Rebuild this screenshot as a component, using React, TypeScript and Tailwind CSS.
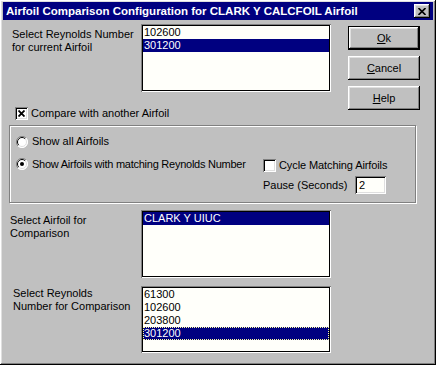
import React from "react";

const raised =
  "shadow-[inset_-1px_-1px_#000,inset_1px_1px_#fff,inset_-2px_-2px_#808080,inset_2px_2px_#dfdfdf]";

const ListBox = ({
  items,
  selected,
  focus,
  className,
}: {
  items: string[];
  selected: number;
  focus?: boolean;
  className: string;
}) => (
  <div
    className={`bg-[#fffffa] p-[2px] shadow-[inset_1px_1px_#808080,inset_-1px_-1px_#fff,inset_2px_2px_#000,inset_-2px_-2px_#000] ${className}`}
  >
    {items.map((it, i) => (
      <div
        key={it}
        className={`h-[13px] leading-[13px] pl-[1px] ${
          i === selected ? "bg-[#000080] text-white" : ""
        } ${i === selected && focus ? "outline-1 outline-dotted outline-[#ffffa0] -outline-offset-1" : ""}`}
      >
        {it}
      </div>
    ))}
  </div>
);

const Button = ({ label, def }: { label: React.ReactNode; def?: boolean }) => (
  <div
    className={`h-[24px] w-[72px] flex items-center justify-center ${
      def ? "border border-black" : ""
    }`}
  >
    <div className={`w-full h-full flex items-center justify-center ${raised}`}>{label}</div>
  </div>
);

const CheckBox = ({ checked }: { checked?: boolean }) => (
  <div className="w-[13px] h-[13px] bg-white shrink-0 shadow-[inset_1px_1px_#808080,inset_-1px_-1px_#fff,inset_2px_2px_#000,inset_-2px_-2px_#dfdfdf] flex items-center justify-center">
    {checked && (
      <svg width="7" height="7" viewBox="0 0 7 7">
        <path d="M0.5 0.5 L6.5 6.5 M6.5 0.5 L0.5 6.5" stroke="#000" strokeWidth="1.8" />
      </svg>
    )}
  </div>
);

const Radio = ({ on }: { on?: boolean }) => (
  <svg width="12" height="12" viewBox="0 0 12 12" className="shrink-0">
    <circle cx="6" cy="6" r="5.5" fill="#fff" />
    <path d="M10 2 A5.5 5.5 0 0 0 2 10" stroke="#808080" strokeWidth="1" fill="none" />
    <path d="M9.2 2.8 A4.5 4.5 0 0 0 2.8 9.2" stroke="#000" strokeWidth="1" fill="none" />
    <path d="M2 10 A5.5 5.5 0 0 0 10 2" stroke="#fff" strokeWidth="1" fill="none" />
    <path d="M2.8 9.2 A4.5 4.5 0 0 0 9.2 2.8" stroke="#dfdfdf" strokeWidth="1" fill="none" />
    {on && <circle cx="6" cy="6" r="2" fill="#000" />}
  </svg>
);

export default function App() {
  return (
    <div
      className={`w-[436px] h-[365px] bg-[#c0c0c0] text-black text-[11px] leading-[13px] overflow-hidden pt-[2px] ${raised}`}
      style={{ fontFamily: '"Liberation Sans", Arial, sans-serif' }}
    >
      {/* title bar */}
      <div className="mx-[3px] h-[18px] bg-[#000080] flex items-center justify-between pl-[3px] pr-[3px]">
        <span className="text-white font-bold text-[11.5px]">
          Airfoil Comparison Configuration for CLARK Y CALCFOIL Airfoil
        </span>
        <div className={`w-[16px] h-[14px] bg-[#c0c0c0] flex items-center justify-center ${raised}`}>
          <svg width="8" height="7" viewBox="0 0 8 7">
            <path d="M0.5 0 L7.5 7 M7.5 0 L0.5 7" stroke="#000" strokeWidth="1.6" />
          </svg>
        </div>
      </div>

      {/* top section */}
      <div className="flex mt-[4px]">
        <div className="w-[331px]">
          <div className="flex">
            <div className="w-[141px] pl-[12px] pt-[4px]">
              Select Reynolds Number
              <br />
              for current Airfoil
            </div>
            <ListBox items={["102600", "301200"]} selected={1} className="w-[190px] h-[68px]" />
          </div>
          <div className="flex items-center mt-[15px] pl-[15px] h-[13px] gap-[3px]">
            <CheckBox checked />
            <span>Compare with another Airfoil</span>
          </div>
        </div>
        <div className="ml-[17px] mt-[2px] flex flex-col gap-[6px]">
          <Button def label={<span><u>O</u>k</span>} />
          <Button label={<span><u>C</u>ancel</span>} />
          <Button label={<span><u>H</u>elp</span>} />
        </div>
      </div>

      {/* group box */}
      <div className="ml-[9px] mt-[5px] w-[407px] h-[78px] border border-[#808080] shadow-[inset_1px_1px_#fff,1px_1px_#fff] pt-[9px] pl-[6px]">
        <div className="flex items-center h-[13px] gap-[4px]">
          <Radio />
          <span>Show all Airfoils</span>
        </div>
        <div className="flex mt-[10px]">
          <div className="w-[247px] flex items-start gap-[4px]">
            <Radio on />
            <span className="leading-[12px] tracking-[-0.25px]">
              Show Airfoils with matching Reynolds Number
            </span>
          </div>
          <div>
            <div className="flex items-center h-[13px] mt-[1px] gap-[3px]">
              <CheckBox />
              <span className="tracking-[-0.1px]">Cycle Matching Airfoils</span>
            </div>
            <div className="flex items-center h-[18px] mt-[4px]">
              <span className="w-[92px]">Pause (Seconds)</span>
              <div className="w-[31px] h-[18px] bg-[#fffffa] pl-[4px] leading-[18px] shadow-[inset_1px_1px_#808080,inset_-1px_-1px_#fff,inset_2px_2px_#000,inset_-2px_-2px_#dfdfdf]">
                2
              </div>
            </div>
          </div>
        </div>
      </div>

      {/* airfoil for comparison */}
      <div className="flex mt-[7px]">
        <div className="w-[141px] pl-[10px] pt-[4px]">
          Select Airfoil for
          <br />
          Comparison
        </div>
        <ListBox items={["CLARK Y UIUC"]} selected={0} className="w-[190px] h-[68px]" />
      </div>

      {/* reynolds for comparison */}
      <div className="flex mt-[8px]">
        <div className="w-[141px] pl-[13px] pt-[1px]">
          Select Reynolds
          <br />
          Number for Comparison
        </div>
        <ListBox
          items={["61300", "102600", "203800", "301200"]}
          selected={3}
          focus
          className="w-[190px] h-[67px]"
        />
      </div>
    </div>
  );
}
